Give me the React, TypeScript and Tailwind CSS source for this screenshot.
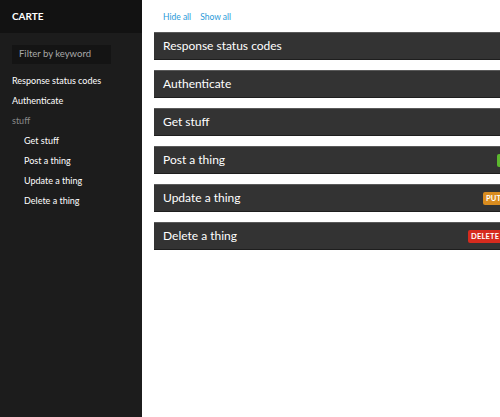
import React from "react";

const bars: { title: string; badge?: { label: string; cls: string } }[] = [
  { title: "Response status codes" },
  { title: "Authenticate" },
  { title: "Get stuff" },
  { title: "Post a thing", badge: { label: "POST", cls: "bg-[#5cb82e] left-[343px]" } },
  { title: "Update a thing", badge: { label: "PUT", cls: "bg-[#d98c1f] left-[329px]" } },
  { title: "Delete a thing", badge: { label: "DELETE", cls: "bg-[#d62b1e] left-[314px]" } },
];

export default function App() {
  return (
    <div
      className="flex w-[500px] h-[417px] overflow-hidden bg-white"
      style={{ fontFamily: 'Lato, "Open Sans", "Liberation Sans", sans-serif' }}
    >
      <aside className="w-[142px] shrink-0 bg-[#1c1c1c] flex flex-col">
        <div className="h-[33px] bg-[#121212] flex items-center pl-[12px] text-[10px] font-bold text-white">
          CARTE
        </div>
        <div className="pl-[12px] pr-[31px] pt-[12px]">
          <div className="h-[19px] bg-[#141414] flex items-center pl-[7px] text-[9.5px] text-[#a8a8a8]">
            Filter by keyword
          </div>
        </div>
        <nav className="pt-[7px] flex flex-col text-[9px] text-white">
          <div className="h-[20px] flex items-center pl-[12px]">Response status codes</div>
          <div className="h-[20px] flex items-center pl-[12px]">Authenticate</div>
          <div className="h-[20px] flex items-center pl-[12px] text-[#8a8a8a]">stuff</div>
          <div className="h-[20px] flex items-center pl-[24px]">Get stuff</div>
          <div className="h-[20px] flex items-center pl-[24px]">Post a thing</div>
          <div className="h-[20px] flex items-center pl-[24px]">Update a thing</div>
          <div className="h-[20px] flex items-center pl-[24px]">Delete a thing</div>
        </nav>
      </aside>
      <main className="flex-1 pl-[12px] pt-[11px] min-w-0">
        <div className="flex gap-[9px] pl-[9px] h-[13px] items-center text-[8.5px] text-[#2a9ad8]">
          <span>Hide all</span>
          <span>Show all</span>
        </div>
        <div className="mt-[8px] flex flex-col gap-[10px] w-[380px]">
          {bars.map((b) => (
            <div
              key={b.title}
              className="relative h-[28px] bg-[#333333] border-t border-t-[#595959] border-b border-b-[#1e1e1e] flex items-center pl-[9px] text-[12px] text-white"
            >
              <span>{b.title}</span>
              {b.badge && (
                <span
                  className={`absolute top-[7px] h-[13px] px-[3px] flex items-center text-[7.5px] font-bold text-white rounded-[2px] tracking-[0.2px] ${b.badge.cls}`}
                >
                  {b.badge.label}
                </span>
              )}
            </div>
          ))}
        </div>
      </main>
    </div>
  );
}
